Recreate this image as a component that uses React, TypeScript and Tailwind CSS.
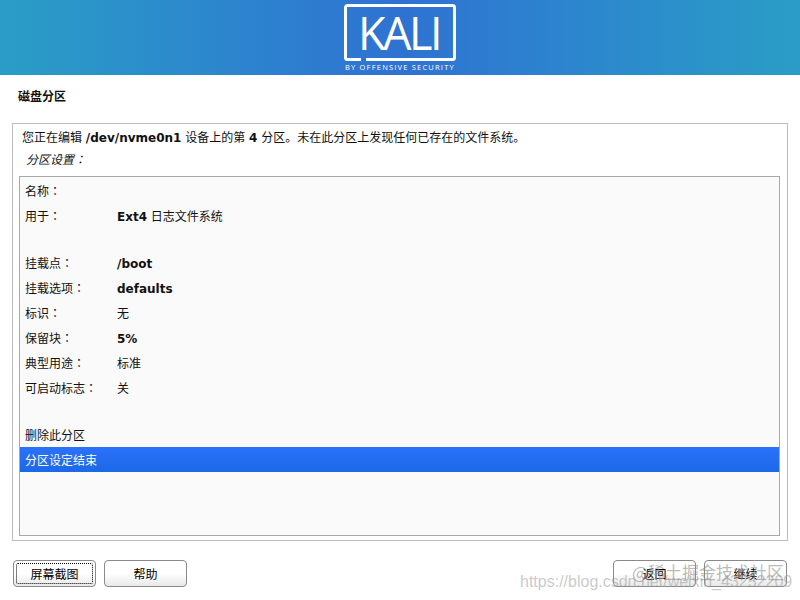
const rows: { label?: string; value?: string; bold?: boolean; selected?: boolean; spacer?: boolean; colon?: boolean }[] = [
  { label: "名称", colon: true },
  { label: "用于", colon: true, value: "Ext4 日志文件系统" },
  { spacer: true },
  { label: "挂载点", colon: true, value: "/boot", bold: true },
  { label: "挂载选项", colon: true, value: "defaults", bold: true },
  { label: "标识", colon: true, value: "无" },
  { label: "保留块", colon: true, value: "5%", bold: true },
  { label: "典型用途", colon: true, value: "标准" },
  { label: "可启动标志", colon: true, value: "关" },
  { spacer: true },
  { label: "删除此分区" },
  { label: "分区设定结束", selected: true },
];

function Colon() {
  return <span className="font-['Noto_Sans_CJK_TC',sans-serif]">：</span>;
}

function KaliLogo() {
  return (
    <svg width="112" height="70" viewBox="0 0 112 70" fill="none">
      <path d="M17 55.500H3.500a2 2 0 0 1-2-2V3.500a2 2 0 0 1 2-2h105a2 2 0 0 1 2 2v50a2 2 0 0 1-2 2H22" stroke="#fff" strokeWidth="3" />
    </svg>
  );
}

function Btn({ children, focused }: { children: string; focused?: boolean }) {
  return (
    <button className="relative h-[27px] w-[83px] rounded-[4px] border border-[#8a8a8a] bg-gradient-to-b from-white via-white to-[#e8e8e8] pt-[2px] text-[12px] text-black">
      {focused && <span className="absolute inset-[2px] rounded-[2px] border border-dotted border-black" />}
      {children}
    </button>
  );
}

export default function App() {
  return (
    <div className="relative flex h-[600px] w-[800px] flex-col overflow-hidden bg-white font-['DejaVu_Sans','Noto_Sans_CJK_SC',sans-serif] text-[12px] text-[#111]">
      <header className="flex h-[75px] justify-center bg-gradient-to-r from-[#2a9dc6] via-[#2f72d2] to-[#2a9dc6]">
        <div className="relative mt-[4px] h-[70px] w-[112px] text-white">
          <KaliLogo />
          <span className="absolute left-[14px] top-[4px] font-['Open_Sans',sans-serif] text-[45px] font-medium leading-[50px] tracking-[-2.500px]">KALI</span>
          <span className="absolute left-[1px] top-[58px] whitespace-nowrap font-['Open_Sans',sans-serif] text-[7.500px] font-medium leading-[10px] tracking-[1.2px]">BY OFFENSIVE SECURITY</span>
        </div>
      </header>

      <h1 className="ml-[18px] mt-[14px] h-[34px] text-[12px] font-bold leading-[16px]">磁盘分区</h1>

      <main className="ml-[12px] mr-[12px] flex h-[418px] flex-col border border-[#bdbdbd] pb-[4px] pl-[6px] pr-[7px]">
        <p className="ml-[3px] mt-[5px] h-[19px] leading-[18px]">
          您正在编辑 <b>/dev/nvme0n1</b> 设备上的第 <b>4</b> 分区。未在此分区上发现任何已存在的文件系统。
        </p>
        <p className="ml-[7px] mt-[2px] h-[20px] italic leading-[18px]">
          分区设置
          <Colon />
        </p>
        <div className="mt-[6px] min-h-0 flex-1 border border-[#a9a9a9] bg-[#fafafa] pt-[1px]">
          {rows.map((row, i) =>
            row.spacer ? (
              <div key={i} className="h-[22px]" />
            ) : (
              <div
                key={i}
                className={
                  row.selected
                    ? "flex h-[25px] items-center bg-gradient-to-b from-[#2a72fb] to-[#1c68e6] pl-[5px] pt-[2px] text-white"
                    : "flex h-[25px] items-center pl-[5px] pt-[2px]"
                }
              >
                <span className="w-[92px] shrink-0">
                  {row.label}
                  {row.colon && <Colon />}
                </span>
                {row.value && (
                  <span className={row.bold ? "font-bold" : ""}>
                    {row.value.startsWith("Ext4") ? (
                      <>
                        <b>Ext4</b> 日志文件系统
                      </>
                    ) : (
                      row.value
                    )}
                  </span>
                )}
              </div>
            ),
          )}
        </div>
      </main>

      <footer className="mx-[13px] mt-[19px] flex justify-between">
        <div className="flex gap-[8px]">
          <Btn focused>屏幕截图</Btn>
          <Btn>帮助</Btn>
        </div>
        <div className="flex gap-[8px]">
          <Btn>返回</Btn>
          <Btn>继续</Btn>
        </div>
      </footer>

      <div className="pointer-events-none absolute left-[520px] top-[573px] whitespace-nowrap font-['Liberation_Sans',sans-serif] text-[16px] leading-[18px] text-[#9c9c9c]/55">
        https://blog.csdn.net/weixin_43252209
      </div>
      <div className="pointer-events-none absolute left-[632px] top-[560px] whitespace-nowrap font-['Noto_Sans_CJK_SC',sans-serif] text-[17px] leading-[24px] text-[#8c8c8c]/60">
        @稀土掘金技术社区
      </div>
    </div>
  );
}
